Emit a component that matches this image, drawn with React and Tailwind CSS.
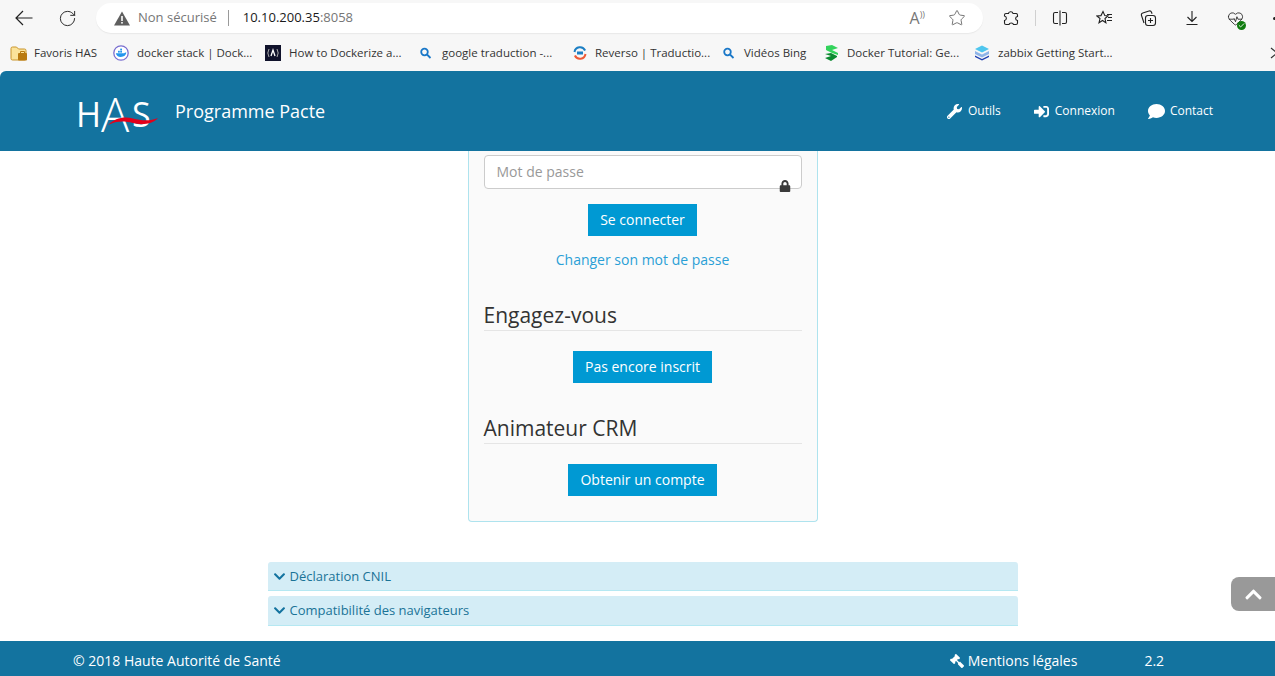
import React from "react";
import { RotateCw, Star, HeartPulse, Check } from "lucide-react";
import { FaWrench, FaSignInAlt, FaComment, FaGavel, FaChevronDown, FaChevronUp, FaLock } from "react-icons/fa";

const FolderIcon = () => (
  <svg width="18" height="18" viewBox="0 0 18 18">
    <path d="M1 4.5a1.5 1.5 0 0 1 1.5-1.5h4l2 2h6a1.5 1.5 0 0 1 1.5 1.5v8a1.5 1.5 0 0 1-1.5 1.5h-12A1.5 1.5 0 0 1 1 14.5z" fill="#fbe39a" stroke="#c9952c" />
    <rect x="8" y="9" width="9" height="7.5" rx="1" fill="#b97a10" />
    <path d="M10.5 9V7.5h4V9" fill="none" stroke="#b97a10" />
  </svg>
);

const DockerIcon = () => (
  <svg width="16" height="16" viewBox="0 0 16 16">
    <circle cx="8" cy="8" r="7.2" fill="#fff" stroke="#7a6fd0" strokeWidth="1.3" />
    <path d="M2.8 8.2h8.4c.6-.9 1.6-.9 2.2-.6-.4 2.6-2.4 4.4-5.6 4.4-2.8 0-4.4-1.5-5-3.8z" fill="#2396ed" />
    <rect x="5" y="5.8" width="1.8" height="1.8" fill="#2396ed" />
    <rect x="7.2" y="5.8" width="1.8" height="1.8" fill="#2396ed" />
    <rect x="7.2" y="3.6" width="1.8" height="1.8" fill="#2396ed" />
  </svg>
);

const DarkIcon = () => (
  <svg width="16" height="16" viewBox="0 0 16 16">
    <rect width="16" height="16" fill="#10122b" />
    <path d="M4 4 2.8 8 4 12M12 4l1.2 4L12 12" fill="none" stroke="#aaa" strokeWidth="1" />
    <path d="M6 11 8 5l2 6" fill="none" stroke="#fff" strokeWidth="1.3" />
  </svg>
);

const SearchIcon = () => (
  <svg width="16" height="16" viewBox="0 0 16 16" fill="none" stroke="#1a78c8" strokeWidth="1.8">
    <circle cx="4.500" cy="7" r="3.300" />
    <path d="m7 9.500 3.500 3.500" />
  </svg>
);

const ReversoIcon = () => (
  <svg width="16" height="16" viewBox="0 0 16 16" fill="none" strokeWidth="2">
    <path d="M2.5 7a5.6 5.6 0 0 1 10.6-1.5" stroke="#1c7fc4" />
    <path d="M13.5 9a5.6 5.6 0 0 1-10.6 1.5" stroke="#ee5a36" />
    <rect x="5" y="6.5" width="6" height="3" fill="#1c7fc4" stroke="none" />
  </svg>
);

const GreenSIcon = () => (
  <svg width="15" height="16" viewBox="0 0 15 16">
    <path d="M2 1 8 0l6 3-6 2 6 3v2L8 8 2 5z" fill="#33d35c" />
    <path d="M1 9l6-1 6 3v1l-6 4-6-3 6-2z" fill="#0b8a30" />
  </svg>
);

const ZabbixIcon = () => (
  <svg width="16" height="16" viewBox="0 0 16 16">
    <path d="M8 0.5 15 4 8 7.5 1 4z" fill="#4fc6ee" />
    <path d="M1 6l7 3.5L15 6v3l-7 3.5L1 9z" fill="#8fb5e8" />
    <path d="M1 10.5 8 14l7-3.5v1.5L8 15.5 1 12z" fill="#1e3fb0" />
  </svg>
);

const bookmarks = [
  { icon: <FolderIcon />, label: "Favoris HAS", box: "w-[103px] gap-[6px]" },
  { icon: <DockerIcon />, label: "docker stack | Dock...", box: "w-[152px] gap-[8px]" },
  { icon: <DarkIcon />, label: "How to Dockerize a...", box: "w-[155px] gap-[8px]" },
  { icon: <SearchIcon />, label: "google traduction -...", box: "w-[152px] gap-[6px]" },
  { icon: <ReversoIcon />, label: "Reverso | Traductio...", box: "w-[151px] gap-[7px]" },
  { icon: <SearchIcon />, label: "Vidéos Bing", box: "w-[101px] gap-[5px]" },
  { icon: <GreenSIcon />, label: "Docker Tutorial: Ge...", box: "w-[150px] gap-[8px]" },
  { icon: <ZabbixIcon />, label: "zabbix Getting Start...", box: "w-[150px] gap-[8px]" },
];

const BrowserChrome = () => (
  <div className="h-[71px] shrink-0 bg-[#f7f7f7] text-[#333]">
    <div className="flex h-[36px] items-center pl-[15px]">
      <svg width="18" height="16" viewBox="0 0 18 16" fill="none" stroke="#222" strokeWidth="1.2" className="shrink-0">
        <path d="M1 8h16.500M8 1 1 8l7 7" />
      </svg>
      <RotateCw size={19} strokeWidth={1.2} className="ml-[25px] shrink-0 text-[#222]" />
      <div className="ml-[19px] flex h-[30px] w-[887px] shrink-0 items-center rounded-full bg-white pl-[18px] pr-[17px] shadow-[0_1px_1px_#e8e8e8]">
        <svg width="16" height="15" viewBox="0 0 16 15">
          <path d="M8 0.5 16 14.5H0z" fill="#5f5f5f" />
          <rect x="7.2" y="5" width="1.6" height="5" fill="#fff" />
          <rect x="7.2" y="11" width="1.6" height="1.6" fill="#fff" />
        </svg>
        <span className="ml-[8px] text-[13px] text-[#767676]">Non sécurisé</span>
        <span className="ml-[11px] h-[16px] w-px bg-[#9a9a9a]"></span>
        <span className="ml-[14px] text-[13px] text-[#1a1a1a]">
          10.10.200.35<span className="text-[#767676]">:8058</span>
        </span>
        <span className="ml-auto text-[16px] leading-none text-[#777]">A<span className="align-top text-[9px]">))</span></span>
        <Star size={18} strokeWidth={1.2} className="ml-[23px] text-[#666]" />
      </div>
      <svg width="16" height="16" viewBox="0 0 16 16" fill="none" stroke="#222" strokeWidth="1.1" className="ml-[20px] shrink-0">
        <path d="M5.500 3.500C5.500 1.500 9.500 1 10 3.500L13 3.500C14 3.500 14.500 4.500 14.500 5L14.500 6.500C12 7 12 10 14.500 10.500L14.500 13C14.500 14 13.500 14.500 13 14.500L10.500 14.500C10 12.500 6.500 12.500 6 14.500L3 14.500C2 14.500 1.500 13.500 1.500 13L1.500 10.500C4 10 4 6.500 1.500 6L1.500 5C1.500 4 2.500 3.500 3 3.500z" />
      </svg>
      <span className="ml-[16px] h-[16px] w-px shrink-0 bg-[#d0d0d0]"></span>
      <svg width="16" height="16" viewBox="0 0 16 16" fill="none" stroke="#222" strokeWidth="1.1" className="ml-[16px] shrink-0">
        <path d="M6 2.500H3A1.500 1.500 0 0 0 1.500 4v8A1.500 1.500 0 0 0 3 13.500h3M10 2.500h3A1.500 1.500 0 0 1 14.500 4v8a1.500 1.500 0 0 1-1.500 1.500h-3M8 .5v15" />
      </svg>
      <svg width="17" height="16" viewBox="0 0 17 16" fill="none" stroke="#222" strokeWidth="1.1" className="ml-[28px] shrink-0">
        <path d="M7 1.500 8.800 5.600l3.200.3-3 2.600.9 4.300L6.500 10.500 3 12.800l1-4.300L.8 5.900l4.200-.3z" />
        <path d="M11 4.500h5M12 7.500h4M11 10.500h5" />
      </svg>
      <svg width="17" height="17" viewBox="0 0 17 17" fill="none" stroke="#222" strokeWidth="1.1" className="ml-[27px] shrink-0">
        <path d="M4 13 1.500 5.500a2 2 0 0 1 1.300-2.500L9 1a2 2 0 0 1 2.500 1.200l.6 1.600" />
        <rect x="5.500" y="5.500" width="10" height="10" rx="2.500" />
        <path d="M10.500 8v5M8 10.500h5" />
      </svg>
      <svg width="14" height="16" viewBox="0 0 14 16" fill="none" stroke="#222" strokeWidth="1.1" className="ml-[28px] shrink-0">
        <path d="M7 1v10M2.500 7 7 11.500 11.500 7M1.500 14.500h11" />
      </svg>
      <div className="relative ml-[28px] shrink-0">
        <HeartPulse size={17} strokeWidth={1.2} className="text-[#222]" />
        <span className="absolute -bottom-[3px] -right-[2px] flex h-[9px] w-[9px] items-center justify-center rounded-full bg-[#107c10]">
          <Check size={7} strokeWidth={3} className="text-white" />
        </span>
      </div>
      <span className="ml-[29px] h-[3px] w-[3px] shrink-0 rounded-full bg-[#222]"></span>
    </div>
    <div className="flex h-[35px] items-center overflow-hidden pb-[1px] pl-[10px] text-[11.5px]">
      {bookmarks.map((b, i) => (
        <div key={i} className={`flex shrink-0 items-center ${b.box}`}>
          {b.icon}
          <span className="whitespace-nowrap">{b.label}</span>
        </div>
      ))}
      <svg width="8" height="12" viewBox="0 0 8 12" fill="none" stroke="#333" strokeWidth="1.2" className="ml-auto mr-[-3px] shrink-0">
        <path d="m1 1 6 5-6 5" />
      </svg>
    </div>
  </div>
);

const NavLink = ({ icon, label, extra }) => (
  <a className={`flex items-center text-[12px] text-white ${extra}`}>
    {icon}
    {label}
  </a>
);

const Logo = () => (
  <div className="relative h-[40px] w-[84px] text-white">
    <span className="absolute left-0 top-[0px] text-[34px] leading-[46px]">H</span>
    <span className="absolute left-[25px] top-[-9px] text-[47px] leading-[64px] font-light">A</span>
    <span className="absolute left-[56px] top-[0px] text-[34px] leading-[46px]">S</span>
    <svg width="50" height="11" viewBox="0 0 50 11" className="absolute left-[32px] top-[24px]">
      <path d="M0 10C7 3 16 1 25 3.500 34 6 43 6 50 3 45 9 34 10.500 25 8 16 5.500 8 6 0 10z" fill="#e2001a" />
    </svg>
  </div>
);

const Header = () => (
  <header className="flex h-[80px] shrink-0 items-center rounded-tl-[6px] bg-[#13739f] pl-[76px] text-white">
    <Logo />
    <span className="ml-[15px] text-[18px]">Programme Pacte</span>
    <nav className="ml-auto flex items-center pr-[62px]">
      <NavLink icon={<FaWrench size={15} />} label="Outils" extra="gap-[6px]" />
      <NavLink icon={<FaSignInAlt size={15} />} label="Connexion" extra="ml-[33px] gap-[6px]" />
      <NavLink icon={<FaComment size={17} />} label="Contact" extra="ml-[33px] gap-[5px]" />
    </nav>
  </header>
);

const SectionTitle = ({ children, extra }) => (
  <h3 className={`border-b border-[#e5e5e5] text-[21px] leading-[29px] text-[#333] ${extra}`}>{children}</h3>
);

const PrimaryButton = ({ children, extra }) => (
  <button className={`mx-auto block h-[32px] bg-[#0099d3] px-[12px] pb-[2px] text-[14px] text-white ${extra}`}>{children}</button>
);

const LoginCard = () => (
  <div className="mx-auto h-[371px] w-[350px] rounded-b-[4px] border border-t-0 border-[#aee3ee] bg-[#fafafa] px-[15px] pt-[4px]">
    <div className="relative">
      <input
        placeholder="Mot de passe"
        className="h-[34px] w-full rounded-[4px] border border-[#ccc] bg-white px-[12px] pb-[2px] text-[14px] placeholder:text-[#999]"
      />
      <FaLock size={12} className="absolute left-[295px] top-[25px] text-[#3a3a3a]" />
    </div>
    <PrimaryButton extra="mt-[15px]">Se connecter</PrimaryButton>
    <a className="mt-[14px] block text-center text-[14px] leading-[20px] text-[#2a9fd6]">Changer son mot de passe</a>
    <SectionTitle extra="mt-[31px]">Engagez-vous</SectionTitle>
    <PrimaryButton extra="mt-[20px]">Pas encore inscrit</PrimaryButton>
    <SectionTitle extra="mt-[31px]">Animateur CRM</SectionTitle>
    <PrimaryButton extra="mt-[20px]">Obtenir un compte</PrimaryButton>
  </div>
);

const AccordionRow = ({ label, extra }) => (
  <div className={`flex items-center gap-[4px] rounded-t-[3px] border-b border-[#b5e8f2] bg-[#d4edf6] pl-[5px] text-[13px] text-[#1a7396] ${extra}`}>
    <FaChevronDown size={13} className="text-[#13739f]" />
    {label}
  </div>
);

const Footer = () => (
  <footer className="flex h-[35px] shrink-0 items-center bg-[#13739f] pl-[73px] pt-[4px] text-[14px] text-white">
    <span>© 2018 Haute Autorité de Santé</span>
    <span className="ml-[669px] flex items-center gap-[4px]">
      <FaGavel size={14} className="-scale-x-100" />
      Mentions légales
    </span>
    <span className="ml-[67px]">2.2</span>
  </footer>
);

const App = () => {
  return (
    <div className="relative flex h-[676px] w-[1275px] flex-col overflow-hidden bg-white [font-family:'Open_Sans',sans-serif]">
      <BrowserChrome />
      <Header />
      <main className="flex-1 overflow-hidden pl-[10px]">
        <LoginCard />
        <div className="mx-auto mt-[40px] flex w-[750px] flex-col gap-[5px]">
          <AccordionRow label="Déclaration CNIL" extra="h-[29px] pt-[1px]" />
          <AccordionRow label="Compatibilité des navigateurs" extra="h-[30px]" />
        </div>
      </main>
      <Footer />
      <button className="absolute left-[1231px] top-[577px] flex h-[34px] w-[44px] items-center justify-center rounded-l-[8px] bg-[#999] text-white">
        <FaChevronUp size={19} />
      </button>
    </div>
  );
};

export default App;
